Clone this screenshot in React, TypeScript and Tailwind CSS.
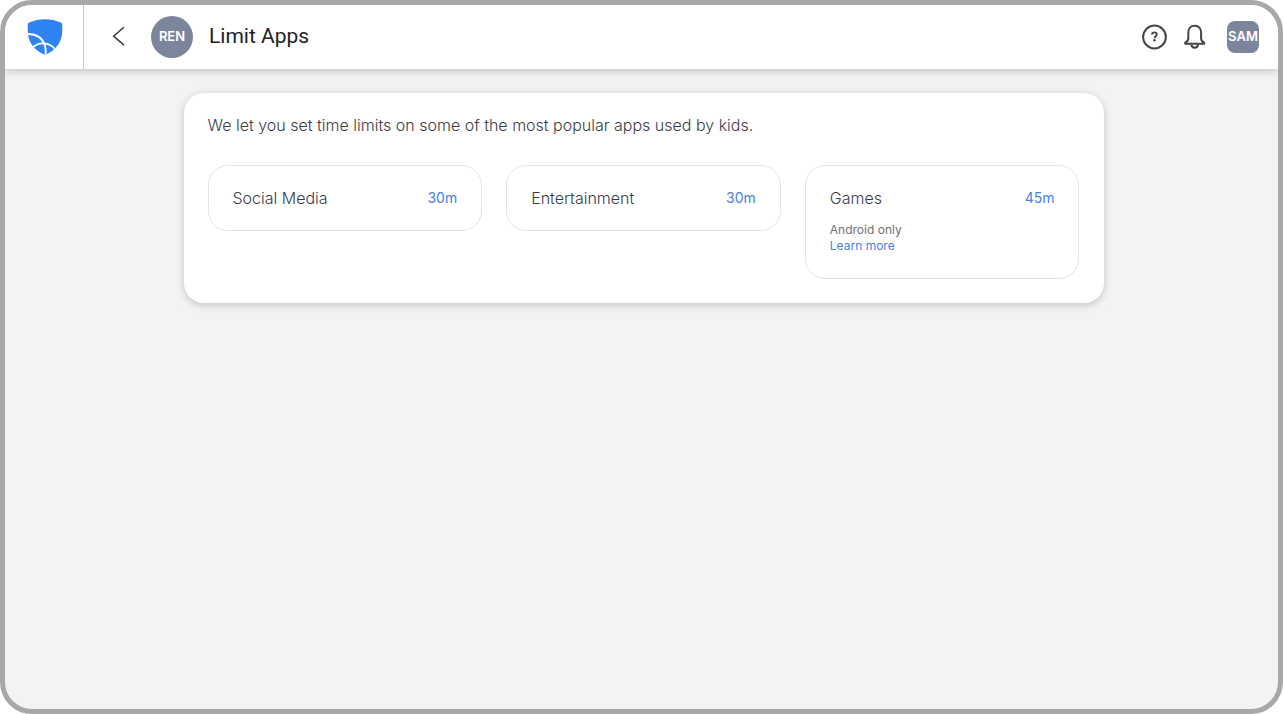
type Category = {
  name: string;
  limit: string;
  note?: string;
};

const categories: Category[] = [
  { name: "Social Media", limit: "30m" },
  { name: "Entertainment", limit: "30m" },
  { name: "Games", limit: "45m", note: "Android only" },
];

function Logo() {
  return (
    <svg viewBox="0 0 36 36" className="w-9 h-9" aria-hidden="true">
      <defs>
        <clipPath id="shield">
          <path d="M18 .2c5.800 0 11 1.200 15.800 3.300 1 .5 1.500 1.200 1.500 2.300v5.700C35.300 22.500 29 31.500 18 35.900 7 31.500.700 22.500.700 11.500V5.800c0-1.100.5-1.800 1.500-2.300C7 1.400 12.200.200 18 .200z" />
        </clipPath>
      </defs>
      <g clipPath="url(#shield)">
        <rect width="36" height="36" fill="#2f84f3" />
        <g fill="none" stroke="#fff" strokeWidth="1.800">
          <path d="M0 15c9.500-.3 15.500 4.200 17.800 11.200 1 3.200 1.200 6.500.6 10" />
          <path d="M4.500 30c6-7.500 17.500-7.800 24.500 1" />
        </g>
      </g>
    </svg>
  );
}

function Header() {
  return (
    <header className="relative flex items-center h-16 bg-white shadow-[0_2px_8px_rgba(0,0,0,0.2)]">
      <a href="#" aria-label="Home" className="flex items-center justify-center w-[79px] h-full pl-px border-r border-[#c8c8c8]">
        <Logo />
      </a>

      <button type="button" aria-label="Back" className="ml-5 p-1 cursor-pointer">
        <svg viewBox="0 0 20 20" className="w-5 h-5" fill="none" stroke="#444" strokeWidth="1.600">
          <path d="M16 .2 5.600 9.200 16 18.200" />
        </svg>
      </button>

      <div className="ml-[19px] flex items-center justify-center w-[42px] h-[42px] rounded-full bg-[#7b869d] text-[13px] font-semibold text-white">
        REN
      </div>
      <h1 className="ml-4 font-[Roboto,sans-serif] text-[21px] font-normal text-[#222]">Limit Apps</h1>

      <div className="ml-auto mr-[19px] flex items-center">
        <button type="button" aria-label="Help" className="cursor-pointer">
          <svg viewBox="0 0 26 26" className="w-[26px] h-[26px]" fill="none" stroke="#454545">
            <circle cx="13.500" cy="13" r="11.400" strokeWidth="2" />
            <path d="M11 10.600c0-1.400 1-2.200 2.400-2.200s2.400.8 2.400 2.100c0 1.700-2.300 1.800-2.300 3.700" strokeWidth="1.900" />
            <circle cx="13.500" cy="16.300" r="1.200" fill="#454545" stroke="none" />
          </svg>
        </button>
        <button type="button" aria-label="Notifications" className="ml-4 cursor-pointer">
          <svg viewBox="0 0 24 26" className="w-6 h-[26px]" fill="none" stroke="#454545" strokeWidth="2" strokeLinejoin="round">
            <path d="M11.700 1.700c-4 0-6.400 2.800-6.400 6.600v6.200c0 1.900-1 3.200-3.100 4.200v1h19v-1c-2.100-1-3.100-2.300-3.100-4.200V8.300c0-3.800-2.400-6.600-6.400-6.600z" />
            <path d="M8.300 20.500c.3 2.100 1.600 3.200 3.400 3.200s3.100-1.100 3.400-3.200" />
          </svg>
        </button>
        <button type="button" className="ml-5 flex items-center justify-center w-8 h-8 rounded-lg bg-[#7b869d] text-[13px] font-semibold text-white cursor-pointer">
          SAM
        </button>
      </div>
    </header>
  );
}

function CategoryCard({ name, limit, note }: Category) {
  return (
    <section className="p-6 rounded-[20px] border border-[#e4e4e7]">
      <div className="flex items-center justify-between h-4">
        <h2 className="text-base font-light text-[#3c3c46]">{name}</h2>
        <button type="button" className="text-sm text-[#4a80e0] cursor-pointer">{limit}</button>
      </div>
      {note && (
        <div className="mt-4 text-xs leading-4">
          <p className="text-[#707078]">{note}</p>
          <a href="#" className="text-[#4a80e0]">Learn more</a>
        </div>
      )}
    </section>
  );
}

export default function App() {
  return (
    <div className="min-h-screen flex flex-col overflow-hidden rounded-[32px] border-5 border-[#a8a8a8] bg-[#f3f3f6] font-[Inter,sans-serif]">
      <Header />
      <main className="py-6 pl-1">
        <div className="max-w-[920px] mx-auto p-6 rounded-[20px] bg-white shadow-[0_2px_8px_rgba(0,0,0,0.2)]">
          <p className="text-base leading-4 font-light text-[#3c3c46]">
            We let you set time limits on some of the most popular apps used by kids.
          </p>
          <div className="mt-8 grid grid-cols-3 items-start gap-6">
            {categories.map(category => (
              <CategoryCard key={category.name} {...category} />
            ))}
          </div>
        </div>
      </main>
    </div>
  );
}
